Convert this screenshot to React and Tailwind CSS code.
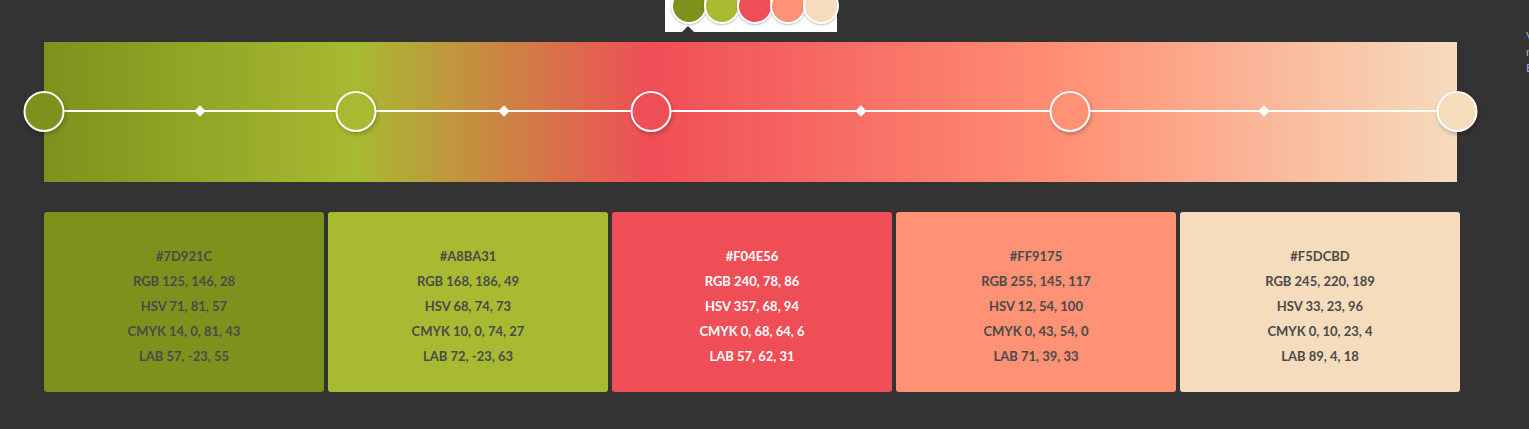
import React from "react";

const colors = [
  { hex: "#7D921C", rgb: "125, 146, 28", hsv: "71, 81, 57", cmyk: "14, 0, 81, 43", lab: "57, -23, 55", light: false },
  { hex: "#A8BA31", rgb: "168, 186, 49", hsv: "68, 74, 73", cmyk: "10, 0, 74, 27", lab: "72, -23, 63", light: false },
  { hex: "#F04E56", rgb: "240, 78, 86", hsv: "357, 68, 94", cmyk: "0, 68, 64, 6", lab: "57, 62, 31", light: true },
  { hex: "#FF9175", rgb: "255, 145, 117", hsv: "12, 54, 100", cmyk: "0, 43, 54, 0", lab: "71, 39, 33", light: false },
  { hex: "#F5DCBD", rgb: "245, 220, 189", hsv: "33, 23, 96", cmyk: "0, 10, 23, 4", lab: "89, 4, 18", light: false },
];

// handle positions in px, relative to the gradient bar
const stops = [0, 312, 607, 1026, 1413];

function SwatchStrip() {
  return (
    <div className="relative ml-[665px] flex h-[32px] w-[172px] items-start bg-white pl-[6px]">
      {colors.map((c, i) => (
        <div
          key={c.hex}
          className={`-mt-[12px] h-[36px] w-[36px] shrink-0 rounded-full border-2 border-white shadow-[0_1px_2px_rgba(0,0,0,0.25)] ${
            i === 0 ? "" : "-ml-[3px]"
          }`}
          style={{ backgroundColor: c.hex }}
        />
      ))}
      <div className="absolute bottom-0 left-[17px] h-0 w-0 border-x-[6px] border-b-[6px] border-x-transparent border-b-[#333333]" />
    </div>
  );
}

function GradientBar() {
  return (
    <div className="relative mx-[44px] mt-[10px] h-[140px] w-[1413px] bg-[linear-gradient(to_right,#7D921C_0%,#A8BA31_22.08%,#F04E56_42.96%,#FF9175_72.6%,#F5DCBD_100%)]">
      <div className="absolute left-0 right-0 top-[68px] h-[2px] bg-white" />
      {stops.slice(0, -1).map((s, i) => (
        <div
          key={"d" + i}
          className="absolute top-[65px] h-[8px] w-[8px] -translate-x-1/2 rotate-45 bg-white"
          style={{ left: (s + stops[i + 1]) / 2 }}
        />
      ))}
      {stops.map((s, i) => (
        <div
          key={"h" + i}
          className="absolute top-[49px] h-[41px] w-[41px] -translate-x-1/2 rounded-full border-2 border-white shadow-[1px_2px_4px_rgba(0,0,0,0.25)]"
          style={{ left: s, backgroundColor: colors[i].hex }}
        />
      ))}
    </div>
  );
}

function ColorCard({ c }) {
  return (
    <div
      className={`flex h-[180px] w-[280px] flex-col items-center rounded-[3px] pt-[32px] text-[13px] font-bold leading-[25px] ${
        c.light ? "text-white" : "text-[#4a4a4a]"
      }`}
      style={{ backgroundColor: c.hex }}
    >
      <div>{c.hex}</div>
      <div>RGB {c.rgb}</div>
      <div>HSV {c.hsv}</div>
      <div>CMYK {c.cmyk}</div>
      <div>LAB {c.lab}</div>
    </div>
  );
}

export default function App() {
  return (
    <div className="relative h-[429px] w-[1529px] overflow-hidden bg-[#333333] font-['Lato','Liberation_Sans',sans-serif]">
      <SwatchStrip />
      <GradientBar />
      <div className="ml-[44px] mt-[30px] flex gap-[4px]">
        {colors.map((c) => (
          <ColorCard key={c.hex} c={c} />
        ))}
      </div>
      {/* side panel text, clipped by the window edge */}
      <div className="absolute left-[1526px] top-[28px] text-[12px] leading-[16px] text-[#8fb0dd]">
        <div>Vi</div>
        <div>n</div>
        <div>E</div>
      </div>
    </div>
  );
}
